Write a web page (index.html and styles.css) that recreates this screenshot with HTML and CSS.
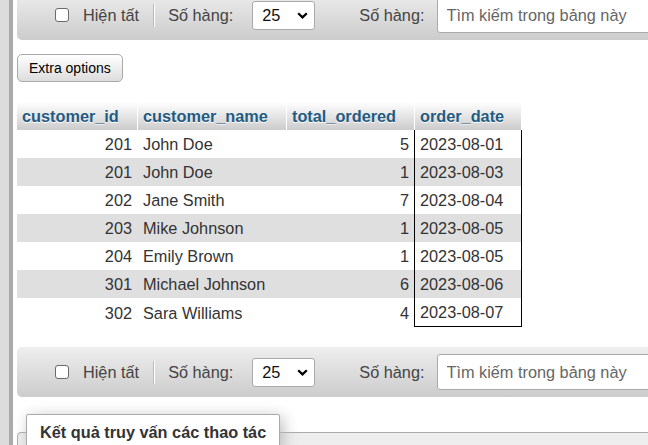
FILE: index.html
```html
<!DOCTYPE html>
<html lang="vi">
<head>
<meta charset="utf-8">
<title>Kết quả truy vấn</title>
<link rel="stylesheet" href="styles.css">
</head>
<body>
<div class="layout">
  <div class="sidebar"></div>
  <main class="main">
    <div class="navbar navbar-top">
      <input class="chk" type="checkbox">
      <span class="showall">Hiện tất</span>
      <span class="sep"></span>
      <span class="lbl">Số hàng:</span>
      <div class="select"><span>25</span><svg class="chev" width="11" height="7" viewBox="0 0 11 7"><path d="M1.2 1.2 L5.5 5.4 L9.8 1.2" fill="none" stroke="#000" stroke-width="2.2"/></svg></div>
      <span class="lbl lbl2">Số hàng:</span>
      <input class="search" type="text" placeholder="Tìm kiếm trong bảng này">
    </div>

    <button class="btn">Extra options</button>

    <table class="data">
      <thead>
        <tr>
          <th class="c1">customer_id</th>
          <th class="c2">customer_name</th>
          <th class="c3">total_ordered</th>
          <th class="c4">order_date</th>
        </tr>
      </thead>
      <tbody>
        <tr><td class="num">201</td><td>John Doe</td><td class="num tot">5</td><td class="date">2023-08-01</td></tr>
        <tr><td class="num">201</td><td>John Doe</td><td class="num tot">1</td><td class="date">2023-08-03</td></tr>
        <tr><td class="num">202</td><td>Jane Smith</td><td class="num tot">7</td><td class="date">2023-08-04</td></tr>
        <tr><td class="num">203</td><td>Mike Johnson</td><td class="num tot">1</td><td class="date">2023-08-05</td></tr>
        <tr><td class="num">204</td><td>Emily Brown</td><td class="num tot">1</td><td class="date">2023-08-05</td></tr>
        <tr><td class="num">301</td><td>Michael Johnson</td><td class="num tot">6</td><td class="date">2023-08-06</td></tr>
        <tr class="last"><td class="num">302</td><td>Sara Williams</td><td class="num tot">4</td><td class="date">2023-08-07</td></tr>
      </tbody>
    </table>

    <div class="navbar navbar-bottom">
      <input class="chk" type="checkbox">
      <span class="showall">Hiện tất</span>
      <span class="sep"></span>
      <span class="lbl">Số hàng:</span>
      <div class="select"><span>25</span><svg class="chev" width="11" height="7" viewBox="0 0 11 7"><path d="M1.2 1.2 L5.5 5.4 L9.8 1.2" fill="none" stroke="#000" stroke-width="2.2"/></svg></div>
      <span class="lbl lbl2">Số hàng:</span>
      <input class="search" type="text" placeholder="Tìm kiếm trong bảng này">
    </div>

    <fieldset class="ops">
      <legend>Kết quả truy vấn các thao tác</legend>
    </fieldset>
  </main>
</div>
</body>
</html>
```

FILE: styles.css
```css
html, body {
  margin: 0;
  height: 100%;
  overflow: hidden;
  background: #fff;
}

body {
  font-family: "Liberation Sans", Arial, sans-serif;
  font-size: 16.3px;
  color: #333;
}

.layout {
  display: flex;
  height: 100%;
}

.sidebar {
  flex: none;
  width: 9px;
  background: #dcdcdc;
  border-right: 4px solid #aaa;
}

.main {
  flex: 1;
  min-width: 0;
  padding-left: 4px;
  overflow: hidden;
}

/* navigation bars */
.navbar {
  display: flex;
  align-items: center;
  height: 50px;
  padding-left: 38px;
  background: linear-gradient(#eee, #ccc);
  border-radius: 5px 0 0 5px;
  white-space: nowrap;
  margin-right: -40px;
  color: #444;
}

.navbar-top {
  margin-top: -10px;
}

.navbar-bottom {
  margin-top: 20px;
}

.chk {
  appearance: none;
  -webkit-appearance: none;
  flex: none;
  box-sizing: border-box;
  width: 14px;
  height: 14px;
  margin: 0;
  background: #fff;
  border: 1px solid #6a6a6a;
  border-radius: 3px;
}

.showall {
  margin-left: 14px;
}

.sep {
  flex: none;
  width: 1px;
  height: 23px;
  margin-left: 14px;
  background: #bbb;
  border-right: 1px solid #fff;
}

.lbl {
  margin-left: 13px;
}

.select {
  flex: none;
  display: flex;
  align-items: center;
  justify-content: space-between;
  box-sizing: border-box;
  width: 63px;
  height: 29px;
  margin-left: 19px;
  padding: 0 6px 0 9px;
  background: #fff;
  border: 1px solid #aaa;
  border-radius: 3px;
  color: #111;
}

.chev {
  display: block;
}

.lbl2 {
  margin-left: 44px;
}

.search {
  flex: none;
  box-sizing: border-box;
  width: 260px;
  height: 36px;
  margin: 0 0 0 12px;
  padding: 0 9px;
  font-family: "Liberation Sans", Arial, sans-serif;
  font-size: 16.3px;
  background: #fff;
  border: 1px solid #aaa;
  border-radius: 3px;
  outline: none;
}

.search::placeholder {
  color: #666;
}

/* button */
.btn {
  display: block;
  height: 28px;
  margin-top: 14px;
  padding: 0 11px;
  font-family: "Liberation Sans", Arial, sans-serif;
  font-size: 14px;
  color: #000;
  background: linear-gradient(#fff, #ddd);
  border: 1px solid #aaa;
  border-radius: 5px;
}

/* results table */
.data {
  margin-top: 20px;
  border-collapse: separate;
  border-spacing: 0;
  table-layout: fixed;
  width: 505px;
}

.data th,
.data td {
  box-sizing: border-box;
  padding: 5px 5px;
  line-height: 18px;
  white-space: nowrap;
  border-right: 1px solid transparent;
}

.data th {
  text-align: left;
  font-weight: bold;
  color: #235a81;
  text-shadow: 0 1px 0 #fff;
  background: linear-gradient(#fff, #ccc);
  border-right: 1px solid #fff;
}

.data th.c1 { width: 121px; }
.data th.c2 { width: 149px; }
.data th.c3 { width: 128px; }
.data th.c4 { width: 107px; }

.data tbody tr:nth-child(even) td {
  background: #dfdfdf;
}

.data td.num {
  text-align: right;
}

.data td.tot {
  border-right: 1px solid #000;
}

.data td.date {
  border-right: 1px solid #000;
}

.data tr.last td.date {
  border-bottom: 1px solid #000;
}

/* operations fieldset */
.ops {
  margin: 17px -40px 0 0;
  padding: 0 8px 40px;
  min-width: 0;
  border: 1px solid #aaa;
  border-radius: 4px 0 0 0;
  background: #eee;
}

.ops legend {
  padding: 8px 13px;
  font-weight: bold;
  color: #333;
  background: #fff;
  border: 1px solid #aaa;
  border-radius: 2px;
  box-shadow: 3px 3px 15px #bbb;
}
```
